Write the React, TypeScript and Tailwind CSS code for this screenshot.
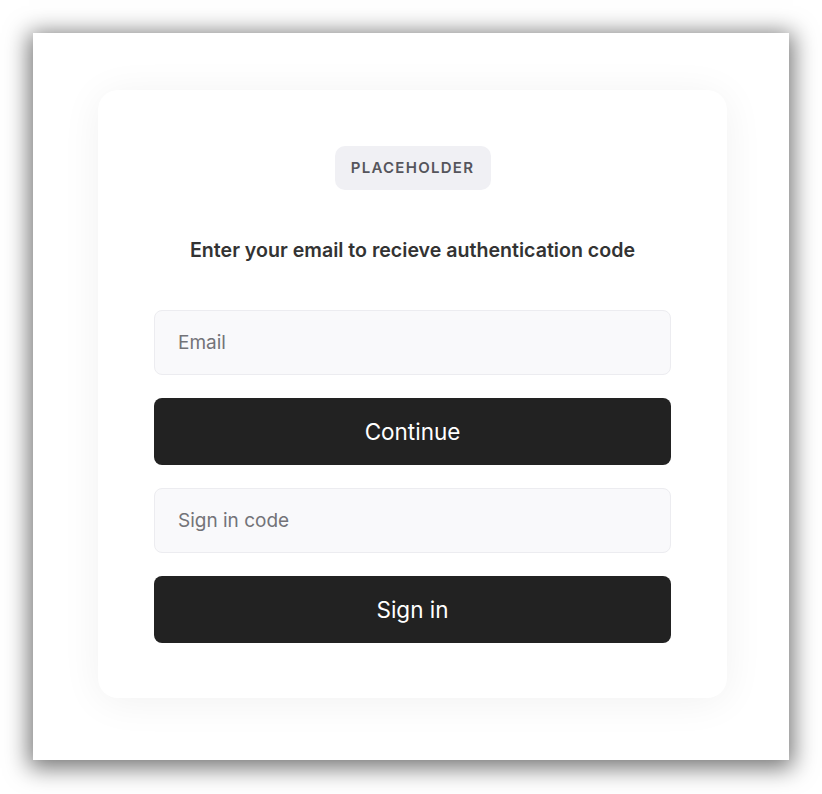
export default function App() {
  return (
    <div className="w-[822px] h-[794px] bg-white pt-[33px] pl-[33px]" style={{ fontFamily: "Inter, 'Noto Sans', sans-serif" }}>
      <div className="w-[756px] h-[727px] bg-white shadow-[0_4px_22px_4px_rgba(0,0,0,0.55)] pt-[57px] pl-[65px]">
        <div className="w-[629px] h-[608px] bg-white rounded-[20px] shadow-[0_4px_40px_rgba(0,0,0,0.06)] px-[56px] pt-[56px] flex flex-col items-center">
          <div className="h-[44px] w-[156px] rounded-[10px] bg-[#f0f0f4] flex items-center justify-center text-[15px] font-semibold tracking-[0.085em] text-[#55555c]">
            PLACEHOLDER
          </div>
          <h1 className="mt-[46px] text-[19.6px] leading-[28px] font-semibold text-[#333333] whitespace-nowrap">
            Enter your email to recieve authentication code
          </h1>
          <div className="mt-[46px] w-full flex flex-col gap-[23px]">
            <input
              placeholder="Email"
              className="w-full h-[65px] rounded-[8px] bg-[#f9f9fb] border border-[#ececf0] px-[23px] text-[19px] text-[#333] placeholder:text-[#737378] outline-none"
            />
            <button className="w-full h-[67px] rounded-[8px] bg-[#222222] text-white text-[22.5px]">
              Continue
            </button>
            <input
              placeholder="Sign in code"
              className="w-full h-[65px] rounded-[8px] bg-[#f9f9fb] border border-[#ececf0] px-[23px] text-[19px] text-[#333] placeholder:text-[#737378] outline-none"
            />
            <button className="w-full h-[67px] rounded-[8px] bg-[#222222] text-white text-[22.5px]">
              Sign in
            </button>
          </div>
        </div>
      </div>
    </div>
  );
}
